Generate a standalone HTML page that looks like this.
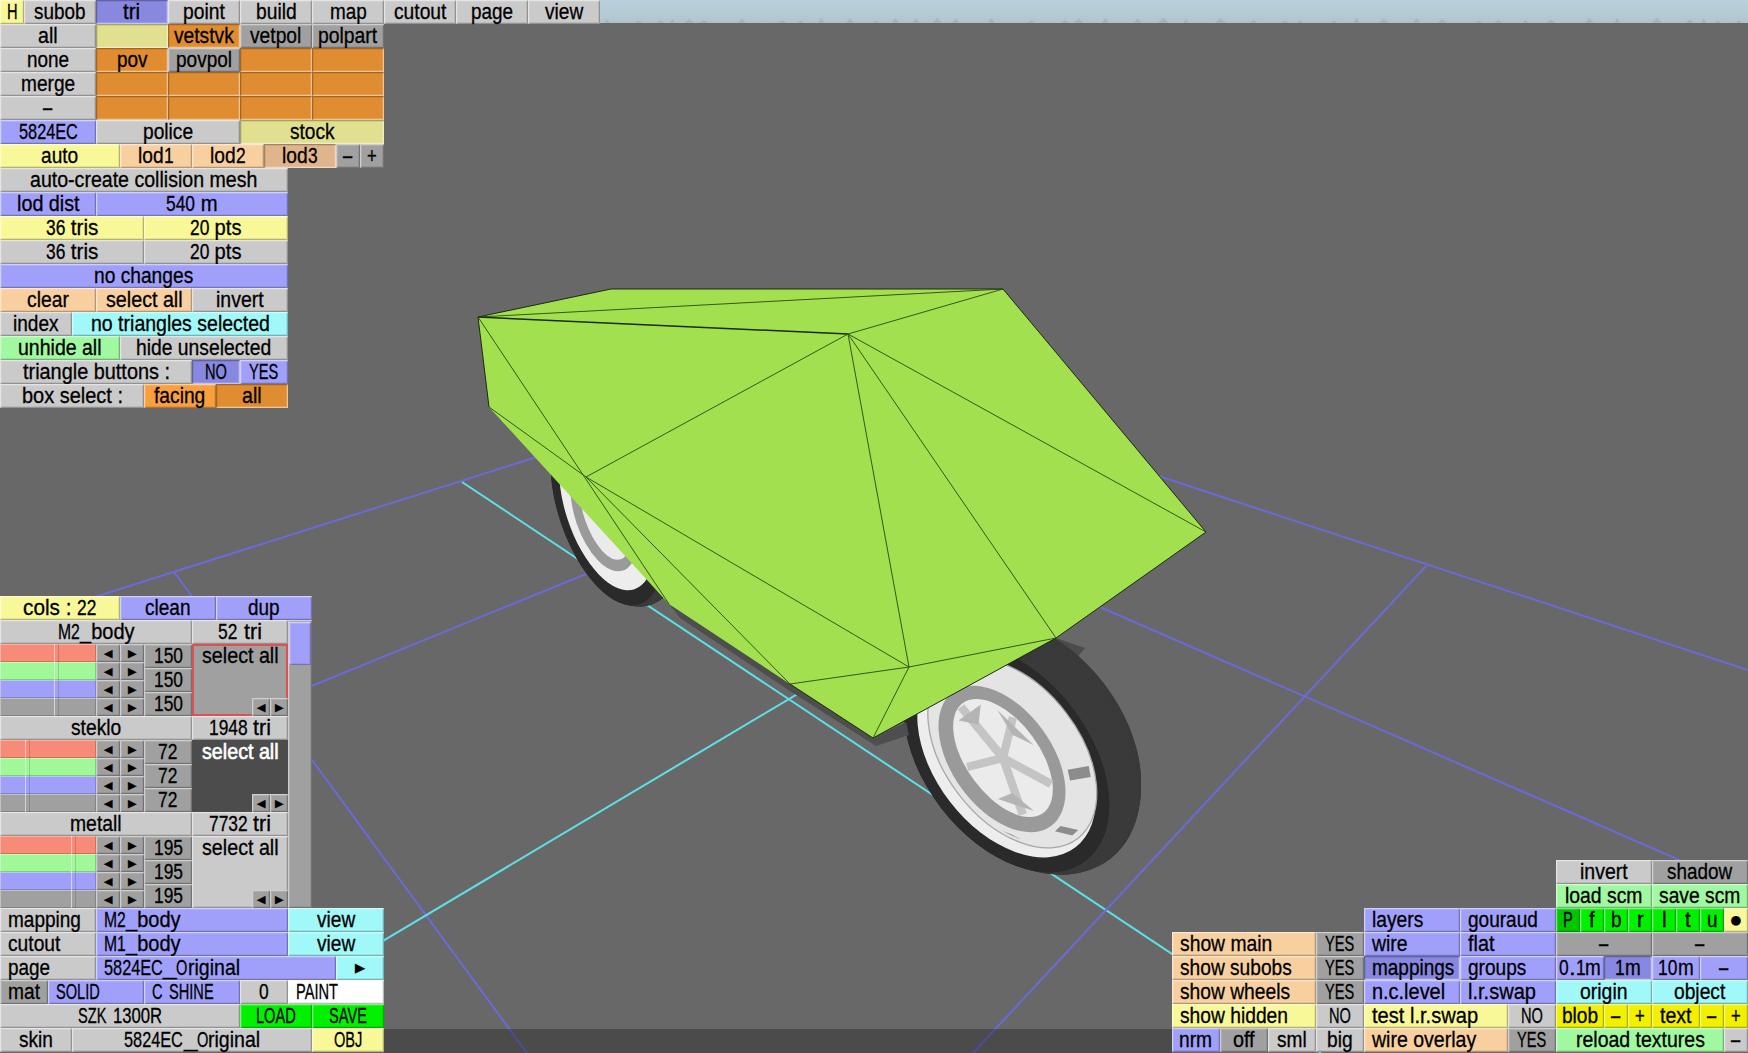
<!DOCTYPE html>
<html><head><meta charset="utf-8"><style>
html,body{margin:0;padding:0;width:1748px;height:1053px;overflow:hidden;background:#686868;}
body{position:relative;font-family:"Liberation Sans",sans-serif;}
.sky{position:absolute;left:0;top:0;width:1748px;height:23px;background:linear-gradient(#b8d0dc 0%,#b4cad2 70%,#b0c2c6 100%);}
.hz{position:absolute;left:0;top:23px;width:1748px;height:1px;background:#505858;}
svg.sc{position:absolute;left:0;top:0;}
.strip{position:absolute;left:384px;top:1029px;width:788px;height:24px;background:rgba(0,0,0,0.28);}
.b{position:absolute;box-sizing:border-box;box-shadow:inset 1px 1px 0 rgba(255,255,255,0.42),inset 2px 2px 0 rgba(255,255,255,0.14),inset -1px -1px 0 rgba(0,0,0,0.22),inset -2px -2px 0 rgba(0,0,0,0.07);overflow:visible;white-space:nowrap;}
.b span{position:absolute;left:0;right:0;top:0;text-align:center;font-size:21.5px;line-height:24px;top:0px;color:#000;-webkit-text-stroke:0.3px #000;transform-origin:50% 0;}
.b.l span{text-align:left;left:8px;}
.b span i{display:inline-block;font-style:normal;white-space:pre;}
.b span i b{display:inline-block;font-weight:normal;transform-origin:0 0;white-space:pre;}
.b.ar span{font-size:11px;line-height:18px;transform:none;}
.b.ar2 span{font-size:13px;transform:none;}
.b.dot span{font-size:22px;transform:none;}
.b.inv{box-shadow:inset 1px 1px 0 rgba(0,0,0,0.22),inset 2px 2px 0 rgba(0,0,0,0.07),inset -1px -1px 0 rgba(255,255,255,0.42),inset -2px -2px 0 rgba(255,255,255,0.14);}
.b.sl{box-shadow:inset 1px 1px 0 rgba(255,255,255,0.35),inset -1px -1px 0 rgba(0,0,0,0.18);}
.b.sl::after{content:"";position:absolute;top:0;bottom:0;left:var(--k);width:5px;border-left:1px solid rgba(255,255,255,0.55);border-right:1px solid rgba(0,0,0,0.15);box-sizing:border-box;}
.b.sel span,.b.seld span{line-height:24px;}
.b.seld span{color:#fff;-webkit-text-stroke:0.6px #fff;}
.b.seld{box-shadow:none;}
.b.red{border:2px solid #e05050;box-shadow:none;}
.b.red span{top:-2px;left:-2px;right:-2px;}
</style></head><body>
<div class="sky"></div>
<svg class="sc" width="1748" height="1053" viewBox="0 0 1748 1053">
<path d="M604.0 23 L607.0 19.4 L609.9 23 Z M634.2 23 L638.3 20.2 L642.4 23 Z M656.5 23 L660.5 20.3 L664.5 23 Z M669.5 23 L672.2 19.0 L674.9 23 Z M684.1 23 L689.0 19.0 L694.0 23 Z M699.5 23 L703.9 19.7 L708.3 23 Z M738.1 23 L741.7 18.5 L745.4 23 Z M777.4 23 L782.5 20.3 L787.5 23 Z M797.5 23 L800.4 20.0 L803.2 23 Z M818.1 23 L821.2 17.6 L824.2 23 Z M846.4 23 L850.0 18.3 L853.7 23 Z M873.8 23 L876.4 20.3 L879.1 23 Z M891.5 23 L895.3 18.1 L899.1 23 Z M912.3 23 L916.2 18.5 L920.0 23 Z M932.7 23 L937.3 17.7 L941.9 23 Z M951.6 23 L955.6 18.5 L959.7 23 Z M988.1 23 L991.4 17.9 L994.8 23 Z M1027.5 23 L1031.3 20.1 L1035.0 23 Z M1060.7 23 L1064.7 20.0 L1068.6 23 Z M1073.8 23 L1078.6 18.2 L1083.4 23 Z M1101.8 23 L1105.3 17.4 L1108.7 23 Z M1133.3 23 L1137.6 18.4 L1141.8 23 Z M1158.1 23 L1163.4 17.6 L1168.8 23 Z M1183.4 23 L1186.0 18.2 L1188.7 23 Z M1215.0 23 L1220.5 18.2 L1226.0 23 Z M1250.0 23 L1253.7 19.5 L1257.3 23 Z M1280.7 23 L1284.6 20.4 L1288.5 23 Z M1297.4 23 L1300.1 20.1 L1302.8 23 Z M1331.0 23 L1334.2 20.0 L1337.4 23 Z M1353.9 23 L1356.6 17.5 L1359.4 23 Z M1378.5 23 L1383.6 18.6 L1388.8 23 Z M1413.4 23 L1416.8 17.5 L1420.1 23 Z M1437.0 23 L1442.2 19.2 L1447.4 23 Z M1475.9 23 L1478.9 20.0 L1481.9 23 Z M1494.4 23 L1498.3 19.7 L1502.3 23 Z M1522.9 23 L1525.4 19.6 L1527.9 23 Z M1546.6 23 L1550.8 19.2 L1555.0 23 Z M1585.3 23 L1589.3 18.1 L1593.4 23 Z M1614.6 23 L1617.2 18.1 L1619.9 23 Z M1651.7 23 L1656.9 17.8 L1662.0 23 Z M1686.1 23 L1689.8 19.1 L1693.5 23 Z M1701.0 23 L1703.7 18.3 L1706.4 23 Z M1714.9 23 L1717.9 19.8 L1720.8 23 Z M1736.4 23 L1738.9 20.3 L1741.4 23 Z" fill="#707c80" fill-opacity="0.2"/>
<line x1="0.0" y1="627.0" x2="824.0" y2="366.0" stroke="#6a6ad8" stroke-width="2"/>
<line x1="174.0" y1="572.0" x2="527.0" y2="1053.0" stroke="#6a6ad8" stroke-width="2"/>
<line x1="462.0" y1="482.0" x2="1321.0" y2="1053.0" stroke="#5ee0e8" stroke-width="2"/>
<line x1="665.0" y1="417.0" x2="1748.0" y2="890.0" stroke="#6a6ad8" stroke-width="2"/>
<line x1="824.0" y1="366.0" x2="1748.0" y2="670.0" stroke="#6a6ad8" stroke-width="2"/>
<line x1="270.0" y1="703.0" x2="973.0" y2="416.0" stroke="#6a6ad8" stroke-width="2"/>
<line x1="1426.0" y1="566.0" x2="973.0" y2="1053.0" stroke="#6a6ad8" stroke-width="2"/>
<line x1="300.0" y1="990.4" x2="1161.0" y2="477.3" stroke="#5ee0e8" stroke-width="2"/>
<polygon points="1030,646 1056,638 1085,648 1075,660 1040,655" fill="#4c4c4c"/>
<ellipse rx="102.3" ry="48.7" fill="#3a3a3a" transform="translate(627.9 500.0) rotate(71.5)" />
<ellipse rx="103.2" ry="49.1" fill="#3a3a3a" transform="translate(626.6 500.5) rotate(71.5)" />
<ellipse rx="104.0" ry="49.5" fill="#3a3a3a" transform="translate(625.3 500.9) rotate(71.5)" />
<ellipse rx="104.7" ry="49.9" fill="#3a3a3a" transform="translate(624.0 501.3) rotate(71.5)" />
<ellipse rx="105.4" ry="50.2" fill="#3a3a3a" transform="translate(622.6 501.8) rotate(71.5)" />
<ellipse rx="105.9" ry="50.5" fill="#3a3a3a" transform="translate(621.3 502.2) rotate(71.5)" />
<ellipse rx="106.3" ry="50.6" fill="#3a3a3a" transform="translate(620.0 502.6) rotate(71.5)" />
<ellipse rx="106.6" ry="50.8" fill="#3a3a3a" transform="translate(618.7 503.1) rotate(71.5)" />
<ellipse rx="106.6" ry="50.8" fill="#3a3a3a" transform="translate(617.4 503.5) rotate(71.5)" />
<ellipse rx="106.6" ry="50.8" fill="#3a3a3a" transform="translate(616.1 503.9) rotate(71.5)" />
<ellipse rx="106.3" ry="50.6" fill="#3a3a3a" transform="translate(614.8 504.4) rotate(71.5)" />
<ellipse rx="105.9" ry="50.5" fill="#3a3a3a" transform="translate(613.5 504.8) rotate(71.5)" />
<ellipse rx="105.4" ry="50.2" fill="#3a3a3a" transform="translate(612.2 505.3) rotate(71.5)" />
<ellipse rx="104.7" ry="49.9" fill="#3a3a3a" transform="translate(610.9 505.7) rotate(71.5)" />
<ellipse rx="104.0" ry="49.5" fill="#3a3a3a" transform="translate(609.6 506.1) rotate(71.5)" />
<ellipse rx="103.2" ry="49.1" fill="#3a3a3a" transform="translate(608.3 506.6) rotate(71.5)" />
<ellipse rx="102.3" ry="48.7" fill="#2a2a2a" transform="translate(607.0 507.0) rotate(71.5)" />
<ellipse rx="102.3" ry="48.7" fill="#2a2a2a" transform="translate(607.0 507.0) rotate(71.5)" />
<ellipse rx="86.7" ry="41.3" fill="#ededed" transform="translate(607.0 507.0) rotate(71.5)" />
<ellipse rx="60.0" ry="29.0" fill="#9a9a9a" transform="translate(604.0 513.7) rotate(71.5)" />
<ellipse rx="49.2" ry="21.2" fill="#ebebeb" transform="translate(605.0 512.7) rotate(71.5)" />
<ellipse rx="129.8" ry="82.5" fill="#3a3a3a" transform="translate(1038.3 733.4) rotate(52.4)" />
<ellipse rx="132.5" ry="84.1" fill="#3a3a3a" transform="translate(1036.3 734.9) rotate(52.4)" />
<ellipse rx="135.0" ry="85.7" fill="#3a3a3a" transform="translate(1034.3 736.4) rotate(52.4)" />
<ellipse rx="137.4" ry="87.2" fill="#3a3a3a" transform="translate(1032.3 738.0) rotate(52.4)" />
<ellipse rx="139.4" ry="88.5" fill="#3a3a3a" transform="translate(1030.4 739.5) rotate(52.4)" />
<ellipse rx="141.1" ry="89.6" fill="#3a3a3a" transform="translate(1028.4 741.0) rotate(52.4)" />
<ellipse rx="142.4" ry="90.4" fill="#3a3a3a" transform="translate(1026.4 742.5) rotate(52.4)" />
<ellipse rx="143.1" ry="90.9" fill="#3a3a3a" transform="translate(1024.4 744.1) rotate(52.4)" />
<ellipse rx="143.4" ry="91.1" fill="#3a3a3a" transform="translate(1022.4 745.6) rotate(52.4)" />
<ellipse rx="143.1" ry="90.9" fill="#3a3a3a" transform="translate(1020.5 747.1) rotate(52.4)" />
<ellipse rx="142.4" ry="90.4" fill="#3a3a3a" transform="translate(1018.5 748.6) rotate(52.4)" />
<ellipse rx="141.1" ry="89.6" fill="#3a3a3a" transform="translate(1016.5 750.2) rotate(52.4)" />
<ellipse rx="139.4" ry="88.5" fill="#3a3a3a" transform="translate(1014.5 751.7) rotate(52.4)" />
<ellipse rx="137.4" ry="87.2" fill="#3a3a3a" transform="translate(1012.5 753.2) rotate(52.4)" />
<ellipse rx="135.0" ry="85.7" fill="#3a3a3a" transform="translate(1010.6 754.7) rotate(52.4)" />
<ellipse rx="132.5" ry="84.1" fill="#3a3a3a" transform="translate(1008.6 756.3) rotate(52.4)" />
<ellipse rx="129.8" ry="82.5" fill="#2a2a2a" transform="translate(1006.6 757.8) rotate(52.4)" />
<ellipse rx="129.8" ry="82.5" fill="#2a2a2a" transform="translate(1006.6 757.8) rotate(52.4)" />
<ellipse rx="112.9" ry="71.7" fill="#ededed" transform="translate(1006.6 757.8) rotate(52.4)" />
<ellipse rx="107.3" ry="67.4" fill="#e4e4e4" transform="translate(1012.3 753.4) rotate(52.4)" stroke="#a8a8a8" stroke-width="1.3"/>
<polygon points="1067.7,769.8 1070.0,780.6 1090.8,776.9 1088.7,766.1" fill="#8c8c8c"/>
<polygon points="1060.6,826.1 1054.9,831.3 1072.3,835.4 1078.2,830.1" fill="#8c8c8c"/>
<polygon points="1011.6,834.5 1002.0,830.4 1011.0,835.3 1020.7,839.4" fill="#8c8c8c"/>
<ellipse rx="83.0" ry="50.0" fill="#9a9a9a" transform="translate(1002.0 759.0) rotate(53.8)" />
<ellipse rx="68.1" ry="36.5" fill="#ebebeb" transform="translate(1003.0 758.0) rotate(53.8)" />
<line x1="1003.0" y1="758.0" x2="1022.8" y2="814.7" stroke="#c4c4c4" stroke-width="8.3"/>
<line x1="1003.0" y1="758.0" x2="967.2" y2="767.1" stroke="#c4c4c4" stroke-width="8.3"/>
<line x1="1003.0" y1="758.0" x2="961.0" y2="706.9" stroke="#c4c4c4" stroke-width="8.3"/>
<line x1="1003.0" y1="758.0" x2="1012.9" y2="717.3" stroke="#c4c4c4" stroke-width="8.3"/>
<line x1="1003.0" y1="758.0" x2="1051.0" y2="784.0" stroke="#c4c4c4" stroke-width="8.3"/>
<polygon points="1012.2,792.9 997.9,799.1 1034.1,811.0" fill="#b4b4b4"/>
<polygon points="978.5,724.5 980.8,704.4 958.6,720.6" fill="#b4b4b4"/>
<polygon points="1012.7,735.0 1033.5,745.1 997.1,709.7" fill="#b4b4b4"/>
<polygon points="669,604 790,684 873,738 906,722 909,735 876,746 790,691 680,618" fill="#4e4e4e"/>
<polygon points="478,317 611,289 1003,289 1206,532 1056,638 873,738 790,684 669,604 489,407" fill="#a2e050"/>
<line x1="478.0" y1="317.0" x2="611.0" y2="289.0" stroke="#1a2a10" stroke-width="1.0"/>
<line x1="611.0" y1="289.0" x2="1003.0" y2="289.0" stroke="#1a2a10" stroke-width="1.0"/>
<line x1="1003.0" y1="289.0" x2="1206.0" y2="532.0" stroke="#1a2a10" stroke-width="1.0"/>
<line x1="1206.0" y1="532.0" x2="1056.0" y2="638.0" stroke="#1a2a10" stroke-width="1.0"/>
<line x1="478.0" y1="317.0" x2="489.0" y2="407.0" stroke="#1a2a10" stroke-width="1.0"/>
<line x1="1056.0" y1="638.0" x2="873.0" y2="738.0" stroke="#1a2a10" stroke-width="1.0"/>
<line x1="790.0" y1="684.0" x2="873.0" y2="738.0" stroke="#1a2a10" stroke-width="1.0"/>
<line x1="478.0" y1="317.0" x2="848.0" y2="334.0" stroke="#1a2a10" stroke-width="1.5"/>
<line x1="478.0" y1="317.0" x2="1003.0" y2="289.0" stroke="#264a0e" stroke-width="0.9"/>
<line x1="1003.0" y1="289.0" x2="848.0" y2="334.0" stroke="#264a0e" stroke-width="0.9"/>
<line x1="848.0" y1="334.0" x2="1206.0" y2="532.0" stroke="#264a0e" stroke-width="0.9"/>
<line x1="848.0" y1="334.0" x2="1056.0" y2="638.0" stroke="#264a0e" stroke-width="0.9"/>
<line x1="848.0" y1="334.0" x2="909.0" y2="667.0" stroke="#264a0e" stroke-width="0.9"/>
<line x1="848.0" y1="334.0" x2="586.0" y2="477.0" stroke="#264a0e" stroke-width="0.9"/>
<line x1="478.0" y1="317.0" x2="669.0" y2="604.0" stroke="#264a0e" stroke-width="0.9"/>
<line x1="489.0" y1="407.0" x2="586.0" y2="477.0" stroke="#264a0e" stroke-width="0.9"/>
<line x1="1056.0" y1="638.0" x2="909.0" y2="667.0" stroke="#264a0e" stroke-width="0.9"/>
<line x1="909.0" y1="667.0" x2="873.0" y2="738.0" stroke="#264a0e" stroke-width="0.9"/>
<line x1="586.0" y1="477.0" x2="909.0" y2="667.0" stroke="#264a0e" stroke-width="0.9"/>
<line x1="586.0" y1="477.0" x2="790.0" y2="684.0" stroke="#264a0e" stroke-width="0.9"/>
<line x1="790.0" y1="684.0" x2="909.0" y2="667.0" stroke="#264a0e" stroke-width="0.9"/>
</svg>
<div class="strip"></div>
<div class="b" style="left:0px;top:0px;width:24px;height:24px;background:#f8f898;"><span><i style="width:10.55px"><b style="transform:scaleX(0.6793)">H</b></i></span></div>
<div class="b" style="left:24px;top:0px;width:72px;height:24px;background:#cacaca;"><span><i style="width:51.48px"><b style="transform:scaleX(0.8789)">subob</b></i></span></div>
<div class="b inv" style="left:96px;top:0px;width:72px;height:24px;background:#8888e0;"><span><i style="width:17.14px"><b style="transform:scaleX(0.9569)">tri</b></i></span></div>
<div class="b" style="left:168px;top:0px;width:72px;height:24px;background:#cacaca;"><span><i style="width:41.81px"><b style="transform:scaleX(0.8968)">point</b></i></span></div>
<div class="b" style="left:240px;top:0px;width:72px;height:24px;background:#cacaca;"><span><i style="width:40.67px"><b style="transform:scaleX(0.8953)">build</b></i></span></div>
<div class="b" style="left:312px;top:0px;width:72px;height:24px;background:#cacaca;"><span><i style="width:36.76px"><b style="transform:scaleX(0.8789)">map</b></i></span></div>
<div class="b" style="left:384px;top:0px;width:72px;height:24px;background:#cacaca;"><span><i style="width:52.41px"><b style="transform:scaleX(0.8948)">cutout</b></i></span></div>
<div class="b" style="left:456px;top:0px;width:72px;height:24px;background:#cacaca;"><span><i style="width:42.04px"><b style="transform:scaleX(0.8789)">page</b></i></span></div>
<div class="b" style="left:528px;top:0px;width:72px;height:24px;background:#cacaca;"><span><i style="width:38.17px"><b style="transform:scaleX(0.8875)">view</b></i></span></div>
<div class="b" style="left:0px;top:24px;width:96px;height:24px;background:#cacaca;"><span><i style="width:19.65px"><b style="transform:scaleX(0.9135)">all</b></i></span></div>
<div class="b inv" style="left:96px;top:24px;width:72px;height:24px;background:#e0e090;"></div>
<div class="b inv" style="left:168px;top:24px;width:72px;height:24px;background:#e08c30;"><span><i style="width:59.73px"><b style="transform:scaleX(0.8928)">vetstvk</b></i></span></div>
<div class="b" style="left:240px;top:24px;width:72px;height:24px;background:#a0a0a0;"><span><i style="width:51.26px"><b style="transform:scaleX(0.8935)">vetpol</b></i></span></div>
<div class="b" style="left:312px;top:24px;width:72px;height:24px;background:#a0a0a0;"><span><i style="width:59.17px"><b style="transform:scaleX(0.9001)">polpart</b></i></span></div>
<div class="b" style="left:0px;top:48px;width:96px;height:24px;background:#cacaca;"><span><i style="width:42.04px"><b style="transform:scaleX(0.8789)">none</b></i></span></div>
<div class="b inv" style="left:96px;top:48px;width:72px;height:24px;background:#e08c30;"><span><i style="width:30.47px"><b style="transform:scaleX(0.8789)">pov</b></i></span></div>
<div class="b" style="left:168px;top:48px;width:72px;height:24px;background:#a0a0a0;"><span><i style="width:56.05px"><b style="transform:scaleX(0.8847)">povpol</b></i></span></div>
<div class="b inv" style="left:240px;top:48px;width:72px;height:24px;background:#e08c30;"></div>
<div class="b inv" style="left:312px;top:48px;width:72px;height:24px;background:#e08c30;"></div>
<div class="b" style="left:0px;top:72px;width:96px;height:24px;background:#cacaca;"><span><i style="width:54.12px"><b style="transform:scaleX(0.8880)">merge</b></i></span></div>
<div class="b inv" style="left:96px;top:72px;width:72px;height:24px;background:#e08c30;"></div>
<div class="b inv" style="left:168px;top:72px;width:72px;height:24px;background:#e08c30;"></div>
<div class="b inv" style="left:240px;top:72px;width:72px;height:24px;background:#e08c30;"></div>
<div class="b inv" style="left:312px;top:72px;width:72px;height:24px;background:#e08c30;"></div>
<div class="b" style="left:0px;top:96px;width:96px;height:24px;background:#cacaca;"><span><i style="width:9.22px"><b style="transform:scaleX(0.7709)">–</b></i></span></div>
<div class="b inv" style="left:96px;top:96px;width:72px;height:24px;background:#e08c30;"></div>
<div class="b inv" style="left:168px;top:96px;width:72px;height:24px;background:#e08c30;"></div>
<div class="b inv" style="left:240px;top:96px;width:72px;height:24px;background:#e08c30;"></div>
<div class="b inv" style="left:312px;top:96px;width:72px;height:24px;background:#e08c30;"></div>
<div class="b" style="left:0px;top:120px;width:96px;height:24px;background:#a0a0fa;"><span><i style="width:58.90px"><b style="transform:scaleX(0.7580)">5824EC</b></i></span></div>
<div class="b" style="left:96px;top:120px;width:144px;height:24px;background:#cacaca;"><span><i style="width:50.12px"><b style="transform:scaleX(0.8921)">police</b></i></span></div>
<div class="b inv" style="left:240px;top:120px;width:144px;height:24px;background:#e0e090;"><span><i style="width:44.57px"><b style="transform:scaleX(0.8881)">stock</b></i></span></div>
<div class="b" style="left:0px;top:144px;width:120px;height:24px;background:#f8f898;"><span><i style="width:37.24px"><b style="transform:scaleX(0.8900)">auto</b></i></span></div>
<div class="b" style="left:120px;top:144px;width:72px;height:24px;background:#f8d0a0;"><span><i style="width:25.59px"><b style="transform:scaleX(0.8918)">lod</b></i><i style="width:9.65px"><b style="transform:scaleX(0.8072)">1</b></i></span></div>
<div class="b" style="left:192px;top:144px;width:72px;height:24px;background:#f8d0a0;"><span><i style="width:25.59px"><b style="transform:scaleX(0.8918)">lod</b></i><i style="width:9.65px"><b style="transform:scaleX(0.8072)">2</b></i></span></div>
<div class="b inv" style="left:264px;top:144px;width:72px;height:24px;background:#e0b48c;"><span><i style="width:25.59px"><b style="transform:scaleX(0.8918)">lod</b></i><i style="width:9.65px"><b style="transform:scaleX(0.8072)">3</b></i></span></div>
<div class="b" style="left:336px;top:144px;width:24px;height:24px;background:#a0a0a0;"><span><i style="width:9.22px"><b style="transform:scaleX(0.7709)">–</b></i></span></div>
<div class="b" style="left:360px;top:144px;width:24px;height:24px;background:#a0a0a0;"><span><i style="width:9.68px"><b style="transform:scaleX(0.7709)">+</b></i></span></div>
<div class="b" style="left:0px;top:168px;width:288px;height:24px;background:#cacaca;"><span><i style="width:227.35px"><b style="transform:scaleX(0.9103)">auto-create collision mesh</b></i></span></div>
<div class="b" style="left:0px;top:192px;width:96px;height:24px;background:#a0a0fa;"><span><i style="width:62.60px"><b style="transform:scaleX(0.9190)">lod dist</b></i></span></div>
<div class="b" style="left:96px;top:192px;width:192px;height:24px;background:#a0a0fa;"><span><i style="width:28.96px"><b style="transform:scaleX(0.8072)">540</b></i><i style="width:22.51px"><b style="transform:scaleX(0.9426)"> m</b></i></span></div>
<div class="b" style="left:0px;top:216px;width:144px;height:24px;background:#f8f898;"><span><i style="width:19.30px"><b style="transform:scaleX(0.8072)">36</b></i><i style="width:33.36px"><b style="transform:scaleX(0.9632)"> tris</b></i></span></div>
<div class="b" style="left:144px;top:216px;width:144px;height:24px;background:#f8f898;"><span><i style="width:19.30px"><b style="transform:scaleX(0.8072)">20</b></i><i style="width:32.44px"><b style="transform:scaleX(0.9362)"> pts</b></i></span></div>
<div class="b" style="left:0px;top:240px;width:144px;height:24px;background:#cacaca;"><span><i style="width:19.30px"><b style="transform:scaleX(0.8072)">36</b></i><i style="width:33.36px"><b style="transform:scaleX(0.9632)"> tris</b></i></span></div>
<div class="b" style="left:144px;top:240px;width:144px;height:24px;background:#cacaca;"><span><i style="width:19.30px"><b style="transform:scaleX(0.8072)">20</b></i><i style="width:32.44px"><b style="transform:scaleX(0.9362)"> pts</b></i></span></div>
<div class="b" style="left:0px;top:264px;width:288px;height:24px;background:#a0a0fa;"><span><i style="width:99.23px"><b style="transform:scaleX(0.8926)">no changes</b></i></span></div>
<div class="b" style="left:0px;top:288px;width:96px;height:24px;background:#f8d0a0;"><span><i style="width:41.89px"><b style="transform:scaleX(0.8988)">clear</b></i></span></div>
<div class="b" style="left:96px;top:288px;width:96px;height:24px;background:#f8d0a0;"><span><i style="width:76.62px"><b style="transform:scaleX(0.9160)">select all</b></i></span></div>
<div class="b" style="left:192px;top:288px;width:96px;height:24px;background:#cacaca;"><span><i style="width:47.60px"><b style="transform:scaleX(0.9054)">invert</b></i></span></div>
<div class="b" style="left:0px;top:312px;width:72px;height:24px;background:#cacaca;"><span><i style="width:45.54px"><b style="transform:scaleX(0.8861)">index</b></i></span></div>
<div class="b" style="left:72px;top:312px;width:216px;height:24px;background:#a0f8f8;"><span><i style="width:178.97px"><b style="transform:scaleX(0.9075)">no triangles selected</b></i></span></div>
<div class="b" style="left:0px;top:336px;width:120px;height:24px;background:#a0f8a0;"><span><i style="width:83.54px"><b style="transform:scaleX(0.9075)">unhide all</b></i></span></div>
<div class="b" style="left:120px;top:336px;width:168px;height:24px;background:#cacaca;"><span><i style="width:135.10px"><b style="transform:scaleX(0.8970)">hide unselected</b></i></span></div>
<div class="b" style="left:0px;top:360px;width:192px;height:24px;background:#cacaca;"><span><i style="width:146.97px"><b style="transform:scaleX(0.9246)">triangle buttons :</b></i></span></div>
<div class="b inv" style="left:192px;top:360px;width:48px;height:24px;background:#8888e0;"><span><i style="width:21.91px"><b style="transform:scaleX(0.6793)">NO</b></i></span></div>
<div class="b" style="left:240px;top:360px;width:48px;height:24px;background:#a0a0fa;"><span><i style="width:29.23px"><b style="transform:scaleX(0.6793)">YES</b></i></span></div>
<div class="b" style="left:0px;top:384px;width:144px;height:24px;background:#cacaca;"><span><i style="width:100.98px"><b style="transform:scaleX(0.9286)">box select :</b></i></span></div>
<div class="b" style="left:144px;top:384px;width:72px;height:24px;background:#f8a040;"><span><i style="width:51.26px"><b style="transform:scaleX(0.8935)">facing</b></i></span></div>
<div class="b inv" style="left:216px;top:384px;width:72px;height:24px;background:#e08c30;"><span><i style="width:19.65px"><b style="transform:scaleX(0.9135)">all</b></i></span></div>
<div class="b" style="left:0px;top:596px;width:120px;height:24px;background:#f8f898;"><span><i style="width:54.29px"><b style="transform:scaleX(0.9668)">cols : </b></i><i style="width:19.30px"><b style="transform:scaleX(0.8072)">22</b></i></span></div>
<div class="b" style="left:120px;top:596px;width:96px;height:24px;background:#a0a0fa;"><span><i style="width:45.54px"><b style="transform:scaleX(0.8861)">clean</b></i></span></div>
<div class="b" style="left:216px;top:596px;width:96px;height:24px;background:#a0a0fa;"><span><i style="width:31.53px"><b style="transform:scaleX(0.8789)">dup</b></i></span></div>
<div class="b scr" style="left:288px;top:620px;width:24px;height:288px;background:#a0a0a0;"></div>
<div class="b thumb" style="left:289px;top:622px;width:22px;height:43px;background:#a0a0fa;"></div>
<div class="b" style="left:0px;top:620px;width:192px;height:24px;background:#cacaca;"><span><i style="width:21.82px"><b style="transform:scaleX(0.7305)">M2</b></i><i style="width:54.53px"><b style="transform:scaleX(0.9309)">_body</b></i></span></div>
<div class="b" style="left:192px;top:620px;width:96px;height:24px;background:#cacaca;"><span><i style="width:19.30px"><b style="transform:scaleX(0.8072)">52</b></i><i style="width:23.91px"><b style="transform:scaleX(1.0011)"> tri</b></i></span></div>
<div class="b sl" style="left:0px;top:644px;width:96px;height:18px;background:#f88a78;--k:54px"></div>
<div class="b ar" style="left:96px;top:644px;width:24px;height:18px;background:#a0a0a0;"><span>◀</span></div>
<div class="b ar" style="left:120px;top:644px;width:24px;height:18px;background:#a0a0a0;"><span>▶</span></div>
<div class="b sl" style="left:0px;top:662px;width:96px;height:18px;background:#a0f898;--k:54px"></div>
<div class="b ar" style="left:96px;top:662px;width:24px;height:18px;background:#a0a0a0;"><span>◀</span></div>
<div class="b ar" style="left:120px;top:662px;width:24px;height:18px;background:#a0a0a0;"><span>▶</span></div>
<div class="b sl" style="left:0px;top:680px;width:96px;height:18px;background:#a0a0f8;--k:54px"></div>
<div class="b ar" style="left:96px;top:680px;width:24px;height:18px;background:#a0a0a0;"><span>◀</span></div>
<div class="b ar" style="left:120px;top:680px;width:24px;height:18px;background:#a0a0a0;"><span>▶</span></div>
<div class="b sl" style="left:0px;top:698px;width:96px;height:18px;background:#a0a0a0;--k:54px"></div>
<div class="b ar" style="left:96px;top:698px;width:24px;height:18px;background:#a0a0a0;"><span>◀</span></div>
<div class="b ar" style="left:120px;top:698px;width:24px;height:18px;background:#a0a0a0;"><span>▶</span></div>
<div class="b" style="left:144px;top:644px;width:48px;height:24px;background:#a0a0a0;"><span><i style="width:28.96px"><b style="transform:scaleX(0.8072)">150</b></i></span></div>
<div class="b" style="left:144px;top:668px;width:48px;height:24px;background:#a0a0a0;"><span><i style="width:28.96px"><b style="transform:scaleX(0.8072)">150</b></i></span></div>
<div class="b" style="left:144px;top:692px;width:48px;height:24px;background:#a0a0a0;"><span><i style="width:28.96px"><b style="transform:scaleX(0.8072)">150</b></i></span></div>
<div class="b sel red" style="left:192px;top:644px;width:96px;height:72px;background:#a0a0a0;"><span><i style="width:76.62px"><b style="transform:scaleX(0.9160)">select all</b></i></span></div>
<div class="b ar" style="left:252px;top:698px;width:18px;height:18px;background:#a0a0a0;"><span>◀</span></div>
<div class="b ar" style="left:270px;top:698px;width:18px;height:18px;background:#a0a0a0;"><span>▶</span></div>
<div class="b" style="left:0px;top:716px;width:192px;height:24px;background:#cacaca;"><span><i style="width:50.20px"><b style="transform:scaleX(0.8938)">steklo</b></i></span></div>
<div class="b" style="left:192px;top:716px;width:96px;height:24px;background:#cacaca;"><span><i style="width:38.61px"><b style="transform:scaleX(0.8072)">1948</b></i><i style="width:23.91px"><b style="transform:scaleX(1.0011)"> tri</b></i></span></div>
<div class="b sl" style="left:0px;top:740px;width:96px;height:18px;background:#f88a78;--k:25px"></div>
<div class="b ar" style="left:96px;top:740px;width:24px;height:18px;background:#a0a0a0;"><span>◀</span></div>
<div class="b ar" style="left:120px;top:740px;width:24px;height:18px;background:#a0a0a0;"><span>▶</span></div>
<div class="b sl" style="left:0px;top:758px;width:96px;height:18px;background:#a0f898;--k:25px"></div>
<div class="b ar" style="left:96px;top:758px;width:24px;height:18px;background:#a0a0a0;"><span>◀</span></div>
<div class="b ar" style="left:120px;top:758px;width:24px;height:18px;background:#a0a0a0;"><span>▶</span></div>
<div class="b sl" style="left:0px;top:776px;width:96px;height:18px;background:#a0a0f8;--k:25px"></div>
<div class="b ar" style="left:96px;top:776px;width:24px;height:18px;background:#a0a0a0;"><span>◀</span></div>
<div class="b ar" style="left:120px;top:776px;width:24px;height:18px;background:#a0a0a0;"><span>▶</span></div>
<div class="b sl" style="left:0px;top:794px;width:96px;height:18px;background:#a0a0a0;--k:25px"></div>
<div class="b ar" style="left:96px;top:794px;width:24px;height:18px;background:#a0a0a0;"><span>◀</span></div>
<div class="b ar" style="left:120px;top:794px;width:24px;height:18px;background:#a0a0a0;"><span>▶</span></div>
<div class="b" style="left:144px;top:740px;width:48px;height:24px;background:#a0a0a0;"><span><i style="width:19.30px"><b style="transform:scaleX(0.8072)">72</b></i></span></div>
<div class="b" style="left:144px;top:764px;width:48px;height:24px;background:#a0a0a0;"><span><i style="width:19.30px"><b style="transform:scaleX(0.8072)">72</b></i></span></div>
<div class="b" style="left:144px;top:788px;width:48px;height:24px;background:#a0a0a0;"><span><i style="width:19.30px"><b style="transform:scaleX(0.8072)">72</b></i></span></div>
<div class="b seld" style="left:192px;top:740px;width:96px;height:72px;background:#4c4c4c;"><span><i style="width:76.62px"><b style="transform:scaleX(0.9160)">select all</b></i></span></div>
<div class="b ar" style="left:252px;top:794px;width:18px;height:18px;background:#a0a0a0;"><span>◀</span></div>
<div class="b ar" style="left:270px;top:794px;width:18px;height:18px;background:#a0a0a0;"><span>▶</span></div>
<div class="b" style="left:0px;top:812px;width:192px;height:24px;background:#cacaca;"><span><i style="width:51.61px"><b style="transform:scaleX(0.9000)">metall</b></i></span></div>
<div class="b" style="left:192px;top:812px;width:96px;height:24px;background:#cacaca;"><span><i style="width:38.61px"><b style="transform:scaleX(0.8072)">7732</b></i><i style="width:23.91px"><b style="transform:scaleX(1.0011)"> tri</b></i></span></div>
<div class="b sl" style="left:0px;top:836px;width:96px;height:18px;background:#f88a78;--k:71px"></div>
<div class="b ar" style="left:96px;top:836px;width:24px;height:18px;background:#a0a0a0;"><span>◀</span></div>
<div class="b ar" style="left:120px;top:836px;width:24px;height:18px;background:#a0a0a0;"><span>▶</span></div>
<div class="b sl" style="left:0px;top:854px;width:96px;height:18px;background:#a0f898;--k:71px"></div>
<div class="b ar" style="left:96px;top:854px;width:24px;height:18px;background:#a0a0a0;"><span>◀</span></div>
<div class="b ar" style="left:120px;top:854px;width:24px;height:18px;background:#a0a0a0;"><span>▶</span></div>
<div class="b sl" style="left:0px;top:872px;width:96px;height:18px;background:#a0a0f8;--k:71px"></div>
<div class="b ar" style="left:96px;top:872px;width:24px;height:18px;background:#a0a0a0;"><span>◀</span></div>
<div class="b ar" style="left:120px;top:872px;width:24px;height:18px;background:#a0a0a0;"><span>▶</span></div>
<div class="b sl" style="left:0px;top:890px;width:96px;height:18px;background:#a0a0a0;--k:71px"></div>
<div class="b ar" style="left:96px;top:890px;width:24px;height:18px;background:#a0a0a0;"><span>◀</span></div>
<div class="b ar" style="left:120px;top:890px;width:24px;height:18px;background:#a0a0a0;"><span>▶</span></div>
<div class="b" style="left:144px;top:836px;width:48px;height:24px;background:#a0a0a0;"><span><i style="width:28.96px"><b style="transform:scaleX(0.8072)">195</b></i></span></div>
<div class="b" style="left:144px;top:860px;width:48px;height:24px;background:#a0a0a0;"><span><i style="width:28.96px"><b style="transform:scaleX(0.8072)">195</b></i></span></div>
<div class="b" style="left:144px;top:884px;width:48px;height:24px;background:#a0a0a0;"><span><i style="width:28.96px"><b style="transform:scaleX(0.8072)">195</b></i></span></div>
<div class="b sel" style="left:192px;top:836px;width:96px;height:72px;background:#cacaca;"><span><i style="width:76.62px"><b style="transform:scaleX(0.9160)">select all</b></i></span></div>
<div class="b ar" style="left:252px;top:890px;width:18px;height:18px;background:#a0a0a0;"><span>◀</span></div>
<div class="b ar" style="left:270px;top:890px;width:18px;height:18px;background:#a0a0a0;"><span>▶</span></div>
<div class="b l" style="left:0px;top:908px;width:96px;height:24px;background:#cacaca;"><span><i style="width:72.85px"><b style="transform:scaleX(0.8834)">mapping</b></i></span></div>
<div class="b l" style="left:96px;top:908px;width:192px;height:24px;background:#a0a0fa;"><span><i style="width:21.82px"><b style="transform:scaleX(0.7305)">M2</b></i><i style="width:54.53px"><b style="transform:scaleX(0.9309)">_body</b></i></span></div>
<div class="b" style="left:288px;top:908px;width:96px;height:24px;background:#a0f8f8;"><span><i style="width:38.17px"><b style="transform:scaleX(0.8875)">view</b></i></span></div>
<div class="b l" style="left:0px;top:932px;width:96px;height:24px;background:#cacaca;"><span><i style="width:52.41px"><b style="transform:scaleX(0.8948)">cutout</b></i></span></div>
<div class="b l" style="left:96px;top:932px;width:192px;height:24px;background:#a0a0fa;"><span><i style="width:21.82px"><b style="transform:scaleX(0.7305)">M1</b></i><i style="width:54.53px"><b style="transform:scaleX(0.9309)">_body</b></i></span></div>
<div class="b" style="left:288px;top:932px;width:96px;height:24px;background:#a0f8f8;"><span><i style="width:38.17px"><b style="transform:scaleX(0.8875)">view</b></i></span></div>
<div class="b l" style="left:0px;top:956px;width:96px;height:24px;background:#cacaca;"><span><i style="width:42.04px"><b style="transform:scaleX(0.8789)">page</b></i></span></div>
<div class="b l" style="left:96px;top:956px;width:240px;height:24px;background:#a0a0fa;"><span><i style="width:58.90px"><b style="transform:scaleX(0.7580)">5824EC</b></i><i style="width:13.56px"><b style="transform:scaleX(1.1337)">_</b></i><i style="width:11.36px"><b style="transform:scaleX(0.6793)">O</b></i><i style="width:52.09px"><b style="transform:scaleX(0.9081)">riginal</b></i></span></div>
<div class="b ar2" style="left:336px;top:956px;width:48px;height:24px;background:#a0f8f8;"><span>▶</span></div>
<div class="b l" style="left:0px;top:980px;width:48px;height:24px;background:#a0a0a0;"><span><i style="width:31.96px"><b style="transform:scaleX(0.8919)">mat</b></i></span></div>
<div class="b l" style="left:48px;top:980px;width:96px;height:24px;background:#a0a0fa;"><span><i style="width:43.83px"><b style="transform:scaleX(0.6793)">SOLID</b></i></span></div>
<div class="b l" style="left:144px;top:980px;width:96px;height:24px;background:#a0a0fa;"><span><i style="width:10.55px"><b style="transform:scaleX(0.6793)">C</b></i><i style="width:6.77px"><b style="transform:scaleX(1.1337)"> </b></i><i style="width:44.64px"><b style="transform:scaleX(0.6793)">SHINE</b></i></span></div>
<div class="b" style="left:240px;top:980px;width:48px;height:24px;background:#cacaca;"><span><i style="width:9.65px"><b style="transform:scaleX(0.8072)">0</b></i></span></div>
<div class="b l" style="left:288px;top:980px;width:96px;height:24px;background:#ffffff;"><span><i style="width:43.01px"><b style="transform:scaleX(0.6793)">PAINT</b></i></span></div>
<div class="b" style="left:0px;top:1004px;width:240px;height:24px;background:#cacaca;"><span><i style="width:28.41px"><b style="transform:scaleX(0.6793)">SZK</b></i><i style="width:6.77px"><b style="transform:scaleX(1.1337)"> </b></i><i style="width:49.16px"><b style="transform:scaleX(0.7759)">1300R</b></i></span></div>
<div class="b" style="left:240px;top:1004px;width:72px;height:24px;background:#00f000;"><span><i style="width:39.77px"><b style="transform:scaleX(0.6793)">LOAD</b></i></span></div>
<div class="b" style="left:312px;top:1004px;width:72px;height:24px;background:#00f000;"><span><i style="width:38.97px"><b style="transform:scaleX(0.6793)">SAVE</b></i></span></div>
<div class="b" style="left:0px;top:1028px;width:72px;height:24px;background:#cacaca;"><span><i style="width:33.97px"><b style="transform:scaleX(0.8886)">skin</b></i></span></div>
<div class="b" style="left:72px;top:1028px;width:240px;height:24px;background:#cacaca;"><span><i style="width:58.90px"><b style="transform:scaleX(0.7580)">5824EC</b></i><i style="width:13.56px"><b style="transform:scaleX(1.1337)">_</b></i><i style="width:11.36px"><b style="transform:scaleX(0.6793)">O</b></i><i style="width:52.09px"><b style="transform:scaleX(0.9081)">riginal</b></i></span></div>
<div class="b" style="left:312px;top:1028px;width:72px;height:24px;background:#f8f898;"><span><i style="width:28.41px"><b style="transform:scaleX(0.6793)">OBJ</b></i></span></div>
<div class="b" style="left:1556px;top:860px;width:96px;height:24px;background:#cacaca;"><span><i style="width:47.60px"><b style="transform:scaleX(0.9054)">invert</b></i></span></div>
<div class="b" style="left:1652px;top:860px;width:96px;height:24px;background:#a0a0a0;"><span><i style="width:65.13px"><b style="transform:scaleX(0.8789)">shadow</b></i></span></div>
<div class="b" style="left:1556px;top:884px;width:96px;height:24px;background:#a0f8a0;"><span><i style="width:77.50px"><b style="transform:scaleX(0.9009)">load scm</b></i></span></div>
<div class="b" style="left:1652px;top:884px;width:96px;height:24px;background:#a0f8a0;"><span><i style="width:81.32px"><b style="transform:scaleX(0.8956)">save scm</b></i></span></div>
<div class="b l" style="left:1364px;top:908px;width:96px;height:24px;background:#a0a0fa;"><span><i style="width:51.33px"><b style="transform:scaleX(0.8951)">layers</b></i></span></div>
<div class="b l" style="left:1460px;top:908px;width:96px;height:24px;background:#a0a0fa;"><span><i style="width:69.90px"><b style="transform:scaleX(0.8859)">gouraud</b></i></span></div>
<div class="b" style="left:1556px;top:908px;width:24px;height:24px;background:#00c800;"><span><i style="width:9.74px"><b style="transform:scaleX(0.6793)">P</b></i></span></div>
<div class="b" style="left:1580px;top:908px;width:24px;height:24px;background:#00f000;"><span><i style="width:5.72px"><b style="transform:scaleX(0.9569)">f</b></i></span></div>
<div class="b" style="left:1604px;top:908px;width:24px;height:24px;background:#00f000;"><span><i style="width:10.51px"><b style="transform:scaleX(0.8789)">b</b></i></span></div>
<div class="b" style="left:1628px;top:908px;width:24px;height:24px;background:#00f000;"><span><i style="width:6.85px"><b style="transform:scaleX(0.9569)">r</b></i></span></div>
<div class="b" style="left:1652px;top:908px;width:24px;height:24px;background:#00f000;"><span><i style="width:4.57px"><b style="transform:scaleX(0.9569)">l</b></i></span></div>
<div class="b" style="left:1676px;top:908px;width:24px;height:24px;background:#00f000;"><span><i style="width:5.72px"><b style="transform:scaleX(0.9569)">t</b></i></span></div>
<div class="b" style="left:1700px;top:908px;width:24px;height:24px;background:#00f000;"><span><i style="width:10.51px"><b style="transform:scaleX(0.8789)">u</b></i></span></div>
<div class="b dot" style="left:1724px;top:908px;width:24px;height:24px;background:#f8f898;"><span>●</span></div>
<div class="b l" style="left:1172px;top:932px;width:144px;height:24px;background:#f8d0a0;"><span><i style="width:92.21px"><b style="transform:scaleX(0.8973)">show main</b></i></span></div>
<div class="b" style="left:1316px;top:932px;width:48px;height:24px;background:#a0a0a0;"><span><i style="width:29.23px"><b style="transform:scaleX(0.6793)">YES</b></i></span></div>
<div class="b l" style="left:1364px;top:932px;width:96px;height:24px;background:#a0a0fa;"><span><i style="width:35.58px"><b style="transform:scaleX(0.9025)">wire</b></i></span></div>
<div class="b l" style="left:1460px;top:932px;width:96px;height:24px;background:#a0a0fa;"><span><i style="width:26.51px"><b style="transform:scaleX(0.9243)">flat</b></i></span></div>
<div class="b" style="left:1556px;top:932px;width:96px;height:24px;background:#a0a0a0;"><span><i style="width:9.22px"><b style="transform:scaleX(0.7709)">–</b></i></span></div>
<div class="b" style="left:1652px;top:932px;width:96px;height:24px;background:#a0a0a0;"><span><i style="width:9.22px"><b style="transform:scaleX(0.7709)">–</b></i></span></div>
<div class="b l" style="left:1172px;top:956px;width:144px;height:24px;background:#f8d0a0;"><span><i style="width:111.81px"><b style="transform:scaleX(0.8910)">show subobs</b></i></span></div>
<div class="b" style="left:1316px;top:956px;width:48px;height:24px;background:#a0a0a0;"><span><i style="width:29.23px"><b style="transform:scaleX(0.6793)">YES</b></i></span></div>
<div class="b l inv" style="left:1364px;top:956px;width:96px;height:24px;background:#8888e0;"><span><i style="width:82.30px"><b style="transform:scaleX(0.8829)">mappings</b></i></span></div>
<div class="b l" style="left:1460px;top:956px;width:96px;height:24px;background:#a0a0fa;"><span><i style="width:58.33px"><b style="transform:scaleX(0.8874)">groups</b></i></span></div>
<div class="b" style="left:1556px;top:956px;width:48px;height:24px;background:#a0a0fa;"><span><i style="width:9.65px"><b style="transform:scaleX(0.8072)">0</b></i><i style="width:6.77px"><b style="transform:scaleX(1.1337)">.</b></i><i style="width:9.65px"><b style="transform:scaleX(0.8072)">1</b></i><i style="width:15.74px"><b style="transform:scaleX(0.8789)">m</b></i></span></div>
<div class="b inv" style="left:1604px;top:956px;width:48px;height:24px;background:#8888e0;"><span><i style="width:9.65px"><b style="transform:scaleX(0.8072)">1</b></i><i style="width:15.74px"><b style="transform:scaleX(0.8789)">m</b></i></span></div>
<div class="b" style="left:1652px;top:956px;width:48px;height:24px;background:#a0a0fa;"><span><i style="width:19.30px"><b style="transform:scaleX(0.8072)">10</b></i><i style="width:15.74px"><b style="transform:scaleX(0.8789)">m</b></i></span></div>
<div class="b" style="left:1700px;top:956px;width:48px;height:24px;background:#a0a0fa;"><span><i style="width:9.22px"><b style="transform:scaleX(0.7709)">–</b></i></span></div>
<div class="b l" style="left:1172px;top:980px;width:144px;height:24px;background:#f8d0a0;"><span><i style="width:110.07px"><b style="transform:scaleX(0.8943)">show wheels</b></i></span></div>
<div class="b" style="left:1316px;top:980px;width:48px;height:24px;background:#a0a0a0;"><span><i style="width:29.23px"><b style="transform:scaleX(0.6793)">YES</b></i></span></div>
<div class="b l" style="left:1364px;top:980px;width:96px;height:24px;background:#a0a0fa;"><span><i style="width:73.11px"><b style="transform:scaleX(0.9269)">n.c.level</b></i></span></div>
<div class="b l" style="left:1460px;top:980px;width:96px;height:24px;background:#a0a0fa;"><span><i style="width:69.08px"><b style="transform:scaleX(0.9325)">l.r.swap</b></i></span></div>
<div class="b" style="left:1556px;top:980px;width:96px;height:24px;background:#a0f8f8;"><span><i style="width:47.52px"><b style="transform:scaleX(0.9037)">origin</b></i></span></div>
<div class="b" style="left:1652px;top:980px;width:96px;height:24px;background:#a0f8f8;"><span><i style="width:51.26px"><b style="transform:scaleX(0.8935)">object</b></i></span></div>
<div class="b l" style="left:1172px;top:1004px;width:144px;height:24px;background:#f8f898;"><span><i style="width:108.00px"><b style="transform:scaleX(0.8946)">show hidden</b></i></span></div>
<div class="b" style="left:1316px;top:1004px;width:48px;height:24px;background:#cacaca;"><span><i style="width:21.91px"><b style="transform:scaleX(0.6793)">NO</b></i></span></div>
<div class="b l" style="left:1364px;top:1004px;width:144px;height:24px;background:#f8f898;"><span><i style="width:107.24px"><b style="transform:scaleX(0.9349)">test l.r.swap</b></i></span></div>
<div class="b" style="left:1508px;top:1004px;width:48px;height:24px;background:#cacaca;"><span><i style="width:21.91px"><b style="transform:scaleX(0.6793)">NO</b></i></span></div>
<div class="b" style="left:1556px;top:1004px;width:48px;height:24px;background:#f0f000;"><span><i style="width:36.10px"><b style="transform:scaleX(0.8880)">blob</b></i></span></div>
<div class="b" style="left:1604px;top:1004px;width:24px;height:24px;background:#f0f000;"><span><i style="width:9.22px"><b style="transform:scaleX(0.7709)">–</b></i></span></div>
<div class="b" style="left:1628px;top:1004px;width:24px;height:24px;background:#f0f000;"><span><i style="width:9.68px"><b style="transform:scaleX(0.7709)">+</b></i></span></div>
<div class="b" style="left:1652px;top:1004px;width:48px;height:24px;background:#f0f000;"><span><i style="width:31.39px"><b style="transform:scaleX(0.9058)">text</b></i></span></div>
<div class="b" style="left:1700px;top:1004px;width:24px;height:24px;background:#f0f000;"><span><i style="width:9.22px"><b style="transform:scaleX(0.7709)">–</b></i></span></div>
<div class="b" style="left:1724px;top:1004px;width:24px;height:24px;background:#f0f000;"><span><i style="width:9.68px"><b style="transform:scaleX(0.7709)">+</b></i></span></div>
<div class="b" style="left:1172px;top:1028px;width:48px;height:24px;background:#a0a0fa;"><span><i style="width:33.10px"><b style="transform:scaleX(0.8939)">nrm</b></i></span></div>
<div class="b" style="left:1220px;top:1028px;width:48px;height:24px;background:#a0a0a0;"><span><i style="width:21.94px"><b style="transform:scaleX(0.9178)">off</b></i></span></div>
<div class="b" style="left:1268px;top:1028px;width:48px;height:24px;background:#cacaca;"><span><i style="width:29.76px"><b style="transform:scaleX(0.8900)">sml</b></i></span></div>
<div class="b" style="left:1316px;top:1028px;width:48px;height:24px;background:#cacaca;"><span><i style="width:25.59px"><b style="transform:scaleX(0.8918)">big</b></i></span></div>
<div class="b l" style="left:1364px;top:1028px;width:144px;height:24px;background:#f8d0a0;"><span><i style="width:104.19px"><b style="transform:scaleX(0.9084)">wire overlay</b></i></span></div>
<div class="b" style="left:1508px;top:1028px;width:48px;height:24px;background:#a0a0a0;"><span><i style="width:29.23px"><b style="transform:scaleX(0.6793)">YES</b></i></span></div>
<div class="b" style="left:1556px;top:1028px;width:168px;height:24px;background:#a0f8a0;"><span><i style="width:128.93px"><b style="transform:scaleX(0.9066)">reload textures</b></i></span></div>
<div class="b" style="left:1724px;top:1028px;width:24px;height:24px;background:#cacaca;"><span><i style="width:9.22px"><b style="transform:scaleX(0.7709)">–</b></i></span></div>
</body></html>
